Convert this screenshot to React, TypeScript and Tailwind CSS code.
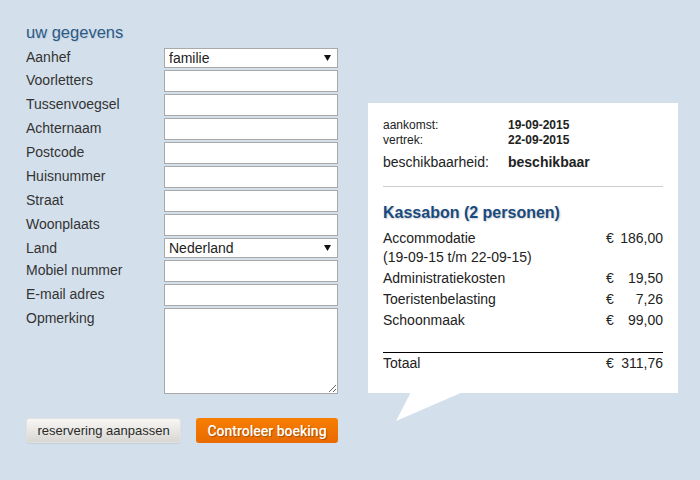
import React from "react";

function Arrow() {
  return (
    <svg width="7" height="6" viewBox="0 0 7 6" className="block">
      <polygon points="0,0 7,0 3.5,6" fill="#111" />
    </svg>
  );
}

function SelectBox({ value }: { value: string }) {
  return (
    <div className="w-[174px] h-[20px] border border-[#a9a9a9] bg-white flex items-center justify-between pl-[4px] pr-[6px] text-[14px] leading-[17px] text-[#222]">
      <span>{value}</span>
      <Arrow />
    </div>
  );
}

function Row({ label, children, first }: { label: string; children: React.ReactNode; first?: boolean }) {
  return (
    <div className="flex items-start">
      <div className={first ? "w-[138px] pt-px text-[14px] leading-[17px] text-[#333]" : "w-[138px] pt-[2px] text-[14px] leading-[17px] text-[#333]"}>{label}</div>
      {children}
    </div>
  );
}

function Input() {
  return <div className="w-[174px] h-[22px] border border-[#a9a9a9] bg-white" />;
}

function Line({ label, amount }: { label: string; amount: string }) {
  return (
    <div className="flex justify-between py-px text-[14px] leading-[19px] text-[#222]">
      <div>{label}</div>
      <div className="w-[57px] flex justify-between">
        <span>€</span>
        <span>{amount}</span>
      </div>
    </div>
  );
}

export default function App() {
  return (
    <div className="w-[700px] h-[480px] bg-[#d3e0ec] flex font-['Liberation_Sans',Arial,sans-serif] text-[#333]">
      <div className="pl-[26px] pt-[22px] w-[338px] shrink-0">
        <h2 className="text-[16.5px] leading-[20px] text-[#2a5a88] mb-[6px] [text-shadow:1px_1px_1px_rgba(0,0,0,0.08)]">uw gegevens</h2>
        <div className="flex flex-col gap-[2px]">
          <Row label="Aanhef" first><SelectBox value="familie" /></Row>
          <Row label="Voorletters"><Input /></Row>
          <Row label="Tussenvoegsel"><Input /></Row>
          <Row label="Achternaam"><Input /></Row>
          <Row label="Postcode"><Input /></Row>
          <Row label="Huisnummer"><Input /></Row>
          <Row label="Straat"><Input /></Row>
          <Row label="Woonplaats"><Input /></Row>
          <Row label="Land"><SelectBox value="Nederland" /></Row>
          <Row label="Mobiel nummer"><Input /></Row>
          <Row label="E-mail adres"><Input /></Row>
          <Row label="Opmerking">
            <textarea className="block w-[174px] h-[86px] border border-[#a9a9a9] bg-white resize" />
          </Row>
        </div>
        <div className="flex gap-[15px] mt-[24px]">
          <button className="w-[155px] h-[25px] rounded-[3px] bg-gradient-to-b from-[#f8f7f5] to-[#d8d7d3] border border-[#e2e1de] text-[13px] leading-[15px] text-[#2a2a2a] shadow-[0_1px_1px_rgba(0,0,0,0.08)]">
            reservering aanpassen
          </button>
          <button className="w-[142px] h-[25px] rounded-[3px] bg-gradient-to-b from-[#f77e00] to-[#e96a00] text-white text-[14px] leading-[16px] font-medium font-['Roboto',sans-serif] [text-shadow:1px_1px_1px_rgba(0,0,0,0.3)]">
            Controleer boeking
          </button>
        </div>
      </div>

      <div className="ml-[30px] mt-[103px] relative w-[310px] h-[290px] bg-white px-[15px] pt-[15px] shrink-0">
        <div className="text-[12px] leading-[15px] text-[#222]">
          <div className="flex"><span className="w-[125px]">aankomst:</span><span className="font-bold">19-09-2015</span></div>
          <div className="flex"><span className="w-[125px]">vertrek:</span><span className="font-bold">22-09-2015</span></div>
        </div>
        <div className="flex mt-[6px] text-[14px] leading-[17px] text-[#222]">
          <span className="w-[125px]">beschikbaarheid:</span>
          <span className="font-bold">beschikbaar</span>
        </div>
        <div className="mt-[15px] border-t border-[#cccccc]" />
        <h3 className="mt-[16px] text-[16px] leading-[19px] font-bold text-[#184a80] [text-shadow:1px_1px_2px_rgba(0,0,0,0.2)]">Kassabon (2 personen)</h3>
        <div className="mt-[6px]">
          <div className="flex justify-between py-px text-[14px] leading-[19px] text-[#222]">
            <div>
              <div>Accommodatie</div>
              <div>(19-09-15 t/m 22-09-15)</div>
            </div>
            <div className="w-[57px] flex justify-between h-[19px]">
              <span>€</span>
              <span>186,00</span>
            </div>
          </div>
          <Line label="Administratiekosten" amount="19,50" />
          <Line label="Toeristenbelasting" amount="7,26" />
          <Line label="Schoonmaak" amount="99,00" />
        </div>
        <div className="mt-[21px] border-t border-black" />
        <Line label="Totaal" amount="311,76" />
        <svg width="100" height="30" viewBox="0 0 100 30" className="absolute left-0 top-full -mt-px">
          <polygon points="43,0 95,0 28,29" fill="#ffffff" />
        </svg>
      </div>
    </div>
  );
}
